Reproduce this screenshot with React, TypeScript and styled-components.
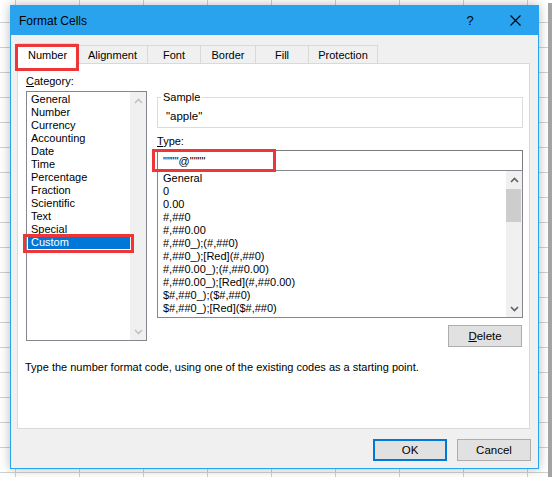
import React from "react";
import styled, { createGlobalStyle } from "styled-components";

const FONT = `"Liberation Sans", Arial, sans-serif`;
const ACCENT = "#2aa3ef";
const RED = "#ee3537";

const GlobalStyle = createGlobalStyle`
  html, body {
    margin: 0;
    padding: 0;
    background: #ffffff;
  }
  body {
    font-family: ${FONT};
    font-size: 11px;
    color: #000;
  }
  * {
    box-sizing: border-box;
  }
`;

const Screen = styled.div`
  width: 548px;
  height: 477px;
  padding: 5px 0 0 10px;
  overflow: hidden;
  background-color: #ffffff;
  background-image: linear-gradient(#d0d0d0 1px, transparent 1px),
    linear-gradient(90deg, #d0d0d0 1px, transparent 1px);
  background-size: 64px 25px;
  background-position: 15px 22px;
  box-shadow: 4px 3px 0 #a3a3a3;
`;

const Dialog = styled.div`
  width: 529px;
  height: 464px;
  border: 1px solid ${ACCENT};
  background: #f0f0f0;
  display: flex;
  flex-direction: column;
  box-shadow: 0 0 10px rgba(0, 0, 0, 0.28);
`;

const TitleBar = styled.div`
  height: 29px;
  background: ${ACCENT};
  display: flex;
  align-items: center;
  padding-left: 8px;
  font-size: 12px;
  color: #000;
`;

const Title = styled.div`
  flex: 1;
`;

const TitleButton = styled.div<{ $w: number }>`
  width: ${(p) => p.$w}px;
  height: 29px;
  display: flex;
  align-items: center;
  justify-content: center;
  font-size: 13px;
`;

const Body = styled.div`
  padding: 8px 8px 0 6px;
  display: flex;
  flex-direction: column;
`;

const TabRow = styled.div`
  display: flex;
  align-items: flex-end;
  height: 21px;
  position: relative;
  z-index: 2;
  margin-bottom: -1px;
`;

const Tab = styled.div<{ $w: number; $active?: boolean }>`
  position: relative;
  width: ${(p) => p.$w}px;
  height: ${(p) => (p.$active ? 21 : 19)}px;
  margin-left: -1px;
  border: 1px solid #d9d9d9;
  border-bottom: ${(p) => (p.$active ? "none" : "1px solid #d9d9d9")};
  background: ${(p) => (p.$active ? "#ffffff" : "#f0f0f0")};
  display: flex;
  align-items: center;
  justify-content: center;
  padding-top: ${(p) => (p.$active ? 2 : 0)}px;
  &:first-child {
    margin-left: 0;
  }
`;

const RedBox = styled.div<{ $l: number; $t: number; $w: number; $h: number }>`
  position: absolute;
  left: ${(p) => p.$l}px;
  top: ${(p) => p.$t}px;
  width: ${(p) => p.$w}px;
  height: ${(p) => p.$h}px;
  border: 3px solid ${RED};
  pointer-events: none;
  z-index: 5;
`;

const Panel = styled.div`
  height: 366px;
  background: #ffffff;
  border: 1px solid #d9d9d9;
  padding: 10px 5px 0 8px;
  display: grid;
  grid-template-columns: 121px 366px;
  column-gap: 10px;
  align-content: start;
`;

const Column = styled.div`
  display: flex;
  flex-direction: column;
`;

const Label = styled.div`
  line-height: 14px;
  height: 14px;
`;

const ListBox = styled.div<{ $h: number }>`
  height: ${(p) => p.$h}px;
  border: 1px solid #828790;
  background: #fff;
  display: flex;
`;

const Items = styled.div`
  flex: 1;
  padding-top: 1px;
  min-width: 0;
`;

const Item = styled.div<{ $selected?: boolean; $pad?: number }>`
  position: relative;
  height: 13px;
  line-height: 13px;
  margin-left: 1px;
  padding-left: ${(p) => p.$pad ?? 3}px;
  white-space: nowrap;
  background: ${(p) => (p.$selected ? "#0078d7" : "transparent")};
  color: ${(p) => (p.$selected ? "#fff" : "#000")};
`;

const ScrollBar = styled.div`
  width: 16px;
  background: #f0f0f0;
  display: flex;
  flex-direction: column;
  align-items: stretch;
`;

const ScrollArrow = styled.div`
  height: 17px;
  display: flex;
  align-items: center;
  justify-content: center;
`;

const ScrollTrack = styled.div`
  flex: 1;
  display: flex;
  flex-direction: column;
  padding: 0 1px 0 0;
`;

const Thumb = styled.div`
  height: 33px;
  margin-top: 1px;
  background: #cdcdcd;
`;

const GroupBox = styled.fieldset`
  margin: 16px 0 0 0;
  padding: 5px 0 2px 8px;
  border: 1px solid #dcdcdc;
  height: 38px;
  min-width: 0;
`;

const Legend = styled.legend`
  padding: 0 2px;
  margin-left: -5px;
  line-height: 14px;
`;

const SampleValue = styled.div`
  line-height: 14px;
  font-size: 11.5px;
`;

const TypeLabel = styled(Label)`
  margin-top: 6px;
`;

const TypeInput = styled.div`
  position: relative;
  margin-top: 2px;
  height: 21px;
  border: 1px solid #7a7a7a;
  border-bottom-color: #828790;
  padding-left: 5px;
  display: flex;
  align-items: center;
  font-size: 11px;
`;

const ButtonRow = styled.div<{ $gap?: number }>`
  display: flex;
  justify-content: flex-end;
  gap: ${(p) => p.$gap || 0}px;
`;

const Button = styled.div<{ $primary?: boolean }>`
  width: 74px;
  height: 22px;
  background: #e1e1e1;
  border: ${(p) => (p.$primary ? "2px solid #0078d7" : "1px solid #adadad")};
  display: flex;
  align-items: center;
  justify-content: center;
  font-size: 11.5px;
`;

const DeleteRow = styled(ButtonRow)`
  margin-top: 7px;
  padding-right: 1px;
`;

const Description = styled.div`
  grid-column: 1 / span 2;
  margin: 13px 0 0 -1px;
  line-height: 14px;
`;

const Footer = styled(ButtonRow)`
  margin-top: 10px;
  margin-right: -1px;
`;

const Chevron = ({ up, color }: { up?: boolean; color: string }) => (
  <svg width="9" height="6" viewBox="0 0 9 6">
    <polyline
      points={up ? "1,5 4.5,1.5 8,5" : "1,1 4.5,4.5 8,1"}
      fill="none"
      stroke={color}
      strokeWidth="1.6"
    />
  </svg>
);

const categories = [
  "General",
  "Number",
  "Currency",
  "Accounting",
  "Date",
  "Time",
  "Percentage",
  "Fraction",
  "Scientific",
  "Text",
  "Special",
  "Custom",
];

const formats = [
  "General",
  "0",
  "0.00",
  "#,##0",
  "#,##0.00",
  "#,##0_);(#,##0)",
  "#,##0_);[Red](#,##0)",
  "#,##0.00_);(#,##0.00)",
  "#,##0.00_);[Red](#,##0.00)",
  "$#,##0_);($#,##0)",
  "$#,##0_);[Red]($#,##0)",
];

const tabs: [string, number][] = [
  ["Number", 61],
  ["Alignment", 71],
  ["Font", 54],
  ["Border", 56],
  ["Fill", 54],
  ["Protection", 70],
];

export default function App() {
  return (
    <>
      <GlobalStyle />
      <Screen>
        <Dialog>
          <TitleBar>
            <Title>Format Cells</Title>
            <TitleButton $w={44}>?</TitleButton>
            <TitleButton $w={46}>
              <svg width="11" height="11" viewBox="0 0 11 11">
                <path d="M0.5 0.5 L10.5 10.5 M10.5 0.5 L0.5 10.5" stroke="#000" strokeWidth="1.1" />
              </svg>
            </TitleButton>
          </TitleBar>
          <Body>
            <TabRow>
              {tabs.map(([name, w], i) => (
                <Tab key={name} $w={w} $active={i === 0}>
                  {name}
                  {i === 0 && <RedBox $l={-3} $t={0} $w={64} $h={27} />}
                </Tab>
              ))}
            </TabRow>
            <Panel>
              <Column>
                <Label>
                  <u>C</u>ategory:
                </Label>
                <ListBox $h={250} style={{ marginTop: 3 }}>
                  <Items>
                    {categories.map((c) => (
                      <Item key={c} $selected={c === "Custom"}>
                        {c}
                        {c === "Custom" && <RedBox $l={-5} $t={-2} $w={111} $h={19} />}
                      </Item>
                    ))}
                  </Items>
                  <ScrollBar>
                    <ScrollArrow>
                      <Chevron up color="#c2c2c2" />
                    </ScrollArrow>
                    <ScrollTrack />
                    <ScrollArrow>
                      <Chevron color="#c2c2c2" />
                    </ScrollArrow>
                  </ScrollBar>
                </ListBox>
              </Column>
              <Column>
                <GroupBox>
                  <Legend>Sample</Legend>
                  <SampleValue>"apple"</SampleValue>
                </GroupBox>
                <TypeLabel>
                  <u>T</u>ype:
                </TypeLabel>
                <TypeInput>
                  """"@""""
                  <RedBox $l={-6} $t={-2} $w={124} $h={23} />
                </TypeInput>
                <ListBox $h={147} style={{ borderTop: "none" }}>
                  <Items>
                    {formats.map((f) => (
                      <Item key={f} $pad={4}>
                        {f}
                      </Item>
                    ))}
                  </Items>
                  <ScrollBar>
                    <ScrollArrow>
                      <Chevron up color="#606060" />
                    </ScrollArrow>
                    <ScrollTrack>
                      <Thumb />
                    </ScrollTrack>
                    <ScrollArrow>
                      <Chevron color="#606060" />
                    </ScrollArrow>
                  </ScrollBar>
                </ListBox>
                <DeleteRow>
                  <Button>
                    <u>D</u>elete
                  </Button>
                </DeleteRow>
              </Column>
              <Description>
                Type the number format code, using one of the existing codes as a starting point.
              </Description>
            </Panel>
            <Footer $gap={10}>
              <Button $primary>OK</Button>
              <Button>Cancel</Button>
            </Footer>
          </Body>
        </Dialog>
      </Screen>
    </>
  );
}
